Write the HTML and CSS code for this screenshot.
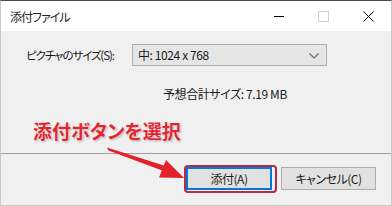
FILE: index.html
```html
<!DOCTYPE html>
<html lang="ja">
<head>
<meta charset="utf-8">
<link rel="stylesheet" href="styles.css">
</head>
<body>
<div class="window">
  <div class="titlebar">
    <span class="title">添付ファイル</span>
    <div class="caps">
      <div class="cap"><svg width="10" height="10" viewBox="0 0 10 10"><path d="M0 5.5H10" stroke="#000" stroke-width="1"/></svg></div>
      <div class="cap"><svg width="11" height="11" viewBox="0 0 11 11"><rect x="0.5" y="0.5" width="10" height="10" fill="none" stroke="#cfcfcf" stroke-width="1"/></svg></div>
      <div class="cap"><svg width="11" height="11" viewBox="0 0 11 11"><path d="M0.5 0.5L10.5 10.5M10.5 0.5L0.5 10.5" stroke="#000" stroke-width="1"/></svg></div>
    </div>
  </div>
  <div class="content">
    <div class="row">
      <span class="label">ピクチャのサイズ(S):</span>
      <div class="select">
        <span class="value">中: 1024 x 768</span>
        <svg class="chev" width="10" height="6" viewBox="0 0 10 6"><path d="M0.5 0.5L5 5L9.5 0.5" fill="none" stroke="#6d6d6d" stroke-width="1.2"/></svg>
      </div>
    </div>
    <div class="sum">予想合計サイズ: 7.19 MB</div>
  </div>
  <div class="footer">
    <button class="btn btn-default">添付(A)</button>
    <button class="btn btn-cancel">キャンセル(C)</button>
  </div>
  <div class="note">添付ボタンを選択</div>
  <div class="highlight"></div>
  <svg class="arrow" width="392" height="206" viewBox="0 0 392 206">
    <path d="M107 147.5 L108.5 150.5 L163.5 171 L165.5 166 Z" fill="#e3212b"/>
    <path d="M184 178 L159 177.5 L166 160 Z" fill="#e3212b"/>
  </svg>
</div>
</body>
</html>
```

FILE: styles.css
```css
html, body {
  margin: 0;
  padding: 0;
  background: #f0f0f0;
}
body {
  width: 392px;
  height: 206px;
  overflow: hidden;
  font-family: "Noto Sans CJK JP", "Noto Sans", sans-serif;
  font-feature-settings: "palt";
  color: #000;
}
.window {
  position: relative;
  width: 392px;
  height: 206px;
  box-sizing: border-box;
  border-top: 1px solid #4a4a4a;
  border-left: 1px solid #c8c8c8;
  border-right: 1px solid #c8c8c8;
  border-bottom: 1px solid #c8c8c8;
  display: flex;
  flex-direction: column;
  background: #f0f0f0;
}
.titlebar {
  height: 30px;
  flex: none;
  background: #fff;
  display: flex;
  align-items: center;
  padding-left: 9px;
}
.title {
  font-size: 12px;
  line-height: 14px;
  margin-top: 1px;
  letter-spacing: -1px;
  color: #222;
}
.caps {
  margin-left: auto;
  display: flex;
  height: 30px;
}
.cap {
  width: 45px;
  height: 30px;
  display: flex;
  align-items: center;
  justify-content: center;
}
.content {
  flex: 1;
  padding-top: 13px;
}
.row {
  display: flex;
  align-items: center;
  padding-left: 25px;
}
.label {
  width: 106px;
  font-size: 11.5px;
  line-height: 16px;
  letter-spacing: -1.1px;
  color: #1a1a1a;
}
.select {
  width: 195px;
  height: 22px;
  box-sizing: border-box;
  border: 1px solid #adadad;
  background: #e5e5e5;
  display: flex;
  align-items: center;
  padding: 0 4px 0 5px;
}
.value {
  font-size: 12px;
  line-height: 16px;
  letter-spacing: -0.4px;
  color: #1a1a1a;
}
.chev {
  margin-left: auto;
  margin-right: 3px;
  margin-top: 1px;
}
.sum {
  margin-top: 20px;
  padding-left: 162px;
  font-size: 12px;
  line-height: 16px;
  letter-spacing: -0.4px;
  color: #1a1a1a;
}
.footer {
  height: 52px;
  flex: none;
  box-sizing: border-box;
  border-top: 1px solid #a0a0a0;
  display: flex;
  justify-content: flex-end;
  gap: 9px;
  padding: 13px 15px 0 0;
}
.btn {
  height: 23px;
  box-sizing: border-box;
  border: 1px solid #adadad;
  background: #e1e1e1;
  font-family: inherit;
  font-feature-settings: "palt";
  font-size: 12px;
  line-height: 16px;
  letter-spacing: -0.5px;
  padding: 0;
  color: #1a1a1a;
}
.btn-default {
  width: 86px;
  border: 2px solid #0078d7;
}
.btn-cancel {
  width: 95px;
}
.note {
  position: absolute;
  left: 32px;
  top: 118px;
  font-size: 19px;
  line-height: 24px;
  font-weight: 700;
  color: #e0262f;
  text-shadow: 0 0 1px #fff, 0 0 2px #fff, 1px 1px 2px rgba(0,0,0,0.35);
}
.highlight {
  position: absolute;
  left: 183px;
  top: 164px;
  width: 89px;
  height: 24px;
  border: 2px solid #b52a45;
  border-radius: 4px;
}
.arrow {
  position: absolute;
  left: -1px;
  top: -1px;
}
```
